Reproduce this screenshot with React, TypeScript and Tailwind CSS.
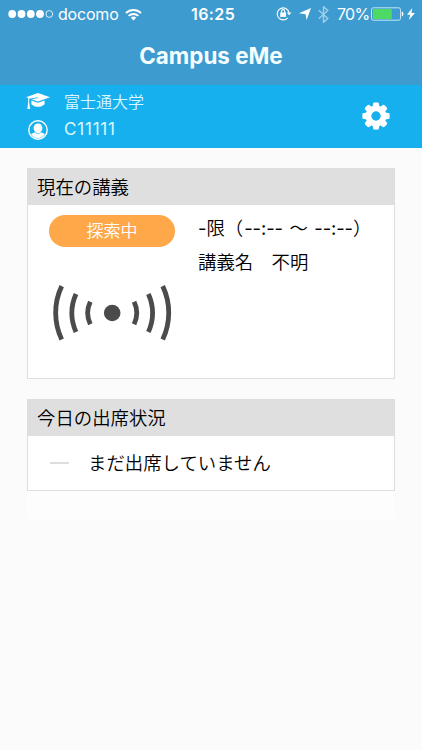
import type { ReactNode } from "react";

function StatusBar() {
  return (
    <div className="relative flex h-7 items-center text-white">
      <svg className="ml-2 h-3 w-[46px]" viewBox="0 0 46 12" fill="#fff">
        {[4.2, 13.5, 22.8, 32].map((x) => (
          <circle key={x} cx={x} cy="6" r="3.9" />
        ))}
        <circle cx="41.3" cy="6" r="3.4" fill="none" stroke="#fff" strokeWidth="0.8" />
      </svg>
      <span className="ml-1 w-[61px] text-[16px] leading-7 tracking-[-0.2px]">docomo</span>
      <svg className="ml-[6px] h-[13px] w-[17px]" viewBox="0 0 17 12" fill="none" stroke="#fff" strokeWidth="2">
        <path d="M1 4.5a10.7 10.7 0 0 1 15 0" />
        <path d="M3.7 7.4a6.8 6.8 0 0 1 9.6 0" />
        <path d="M8.5 12 5.8 9.2a3.9 3.9 0 0 1 5.4 0z" fill="#fff" stroke="none" />
      </svg>
      <span className="absolute left-[191px] text-[16px] font-semibold leading-7 tracking-[0.4px]">
        16:25
      </span>
      <div className="ml-auto flex items-center pr-[7px]">
        <svg className="mb-px h-[15px] w-4" viewBox="0 0 16 15" fill="none" stroke="#fff" strokeWidth="1.1">
          <path d="M11.7 11.8a6 6 0 1 1 1.3-5.3" />
          <path d="M10.8 6.4h4.6l-2.3 2.8z" fill="#fff" stroke="none" />
          <rect x="4.2" y="6.5" width="5.8" height="4.4" fill="#fff" stroke="none" />
          <path d="M5.5 7V5.2a1.6 1.6 0 0 1 3.2 0V7" />
        </svg>
        <svg className="ml-[7px] h-3 w-3" viewBox="0 0 12 12" fill="#fff">
          <path d="M12 0 7.6 12 6.6 6.2 0 5.3z" />
        </svg>
        <svg className="ml-[7px] h-[17px] w-[11px] opacity-50" viewBox="0 0 10 16" fill="none" stroke="#fff" strokeWidth="1.4">
          <path d="m0.5 4 8.5 7.8L5 15.3V.7l4 3.5L.5 12" />
        </svg>
        <span className="ml-2 w-[33px] text-[16px] leading-7 tracking-[-0.7px]">70%</span>
        <svg className="ml-px h-[14px] w-[33px]" viewBox="0 0 33 14" fill="none">
          <rect x="0.5" y="0.8" width="29" height="12.4" rx="1.8" stroke="#c2e6f6" strokeWidth="1" />
          <rect x="1.8" y="2" width="19" height="10" rx="0.6" fill="#4cd964" />
          <path d="M30.8 4.6c2.1.4 2.1 4.4 0 4.8z" fill="#fff" />
        </svg>
        <svg className="ml-[3px] h-3 w-2" viewBox="0 0 8 12" fill="#fff">
          <path d="M5.3 0 0 6.7h3.3L1.8 12 8 4.9H4.4z" />
        </svg>
      </div>
    </div>
  );
}

function GraduationCap() {
  return (
    <svg className="mb-px h-[17px] w-6" viewBox="0 0 24 17" fill="#fff">
      <path d="M12 0 24 4.3 12 8.5 5.5 6.3 12 5.1 11.8 4.2 3.2 5.7V9.5L4.2 16H1.3L2.2 9.6V5.1L0 4.3z" />
      <path d="M5.4 7.4 12 9.7 18.6 7.4V11.3C15.2 14.7 8.8 14.7 5.4 11.3z" />
    </svg>
  );
}

function UserCircle() {
  return (
    <svg className="h-5 w-5" viewBox="0 0 20 20">
      <circle cx="10" cy="10" r="9.2" fill="none" stroke="#fff" strokeWidth="1.4" />
      <path
        d="M10 3.5c2.7 0 4.4 1.9 4.4 4.4 0 1.7-.8 3.2-1.8 4 1 .9 3.2.9 4.3 2.1-1.5 2.4-3.9 4-6.9 4s-5.4-1.6-6.9-4c1.1-1.2 3.3-1.2 4.3-2.1-1-.8-1.8-2.3-1.8-4 0-2.5 1.7-4.4 4.4-4.4z"
        fill="#fff"
      />
      <path d="M6.9 12.3c1.7 1.7 4.5 1.7 6.2 0" fill="none" stroke="#17b0ef" strokeWidth="0.6" />
    </svg>
  );
}

function Gear() {
  return (
    <svg className="mb-px h-7 w-7" viewBox="-14 -14 28 28" fill="#fff">
      {[0, 45, 90, 135, 180, 225, 270, 315].map((angle) => (
        <path
          key={angle}
          d="M-3.7-8.5-2.7-13.1Q-2.6-13.6-2-13.6H2Q2.6-13.6 2.7-13.1L3.7-8.5z"
          transform={`rotate(${angle})`}
        />
      ))}
      <circle r="7.5" fill="none" stroke="#fff" strokeWidth="5.6" />
    </svg>
  );
}

function Beacon() {
  return (
    <svg className="h-[60px] w-[126px]" viewBox="0 0 126 60" fill="none" stroke="#4b4b4b" strokeWidth="4.8">
      <circle cx="63.2" cy="30" r="8.3" fill="#4b4b4b" stroke="none" />
      <path d="M12.7 3.1a62 62 0 0 0 0 53.4" />
      <path d="M27 11a47 47 0 0 0 0 38" />
      <path d="M41.3 18.8a26 26 0 0 0 0 22.4" />
      <path d="M85.1 18.8a26 26 0 0 1 0 22.4" />
      <path d="M99.4 11a47 47 0 0 1 0 38" />
      <path d="M113.7 3.1a62 62 0 0 1 0 53.4" />
    </svg>
  );
}

function Card({ title, children }: { title: string; children: ReactNode }) {
  return (
    <section className="border border-[#dedede] bg-white text-[18.4px] text-black">
      <h2 className="flex h-9 items-center bg-[#dfdfdf] pt-px pl-[9px]">{title}</h2>
      {children}
    </section>
  );
}

export default function App() {
  return (
    <div className="h-[750px] w-[422px] overflow-hidden bg-[#fbfbfb] font-['Inter','Noto_Sans_CJK_JP_DemiLight','Noto_Sans_CJK_JP_Light','Noto_Sans_CJK_JP',sans-serif]">
      <header className="h-[85px] bg-[#3d9bd0]">
        <StatusBar />
        <h1 className="flex h-14 items-center justify-center text-[22.4px] font-bold text-[#f4feff]">
          Campus eMe
        </h1>
      </header>

      <div className="flex h-[63px] items-center justify-between bg-[#17b0ef] pr-8 pl-[26px] text-[#d8f8ff]">
        <div className="flex flex-col">
          <div className="flex h-[29px] items-center">
            <GraduationCap />
            <span className="ml-[14px] text-[16px]">富士通大学</span>
          </div>
          <div className="flex h-[29px] items-center pb-[2px] pl-[2px]">
            <UserCircle />
            <span className="ml-4 text-[17px] tracking-[0.8px]">C11111</span>
          </div>
        </div>
        <Gear />
      </div>

      <main className="flex flex-col gap-5 px-[27px] pt-5">
        <Card title="現在の講義">
          <div className="flex h-[173px] pl-[21px]">
            <div className="flex w-[126px] flex-col pt-[10px]">
              <div className="flex h-8 items-center justify-center rounded-full bg-[#ffa84a] pt-[2px] text-[17px] text-white">
                探索中
              </div>
              <div className="mt-[36px]">
                <Beacon />
              </div>
            </div>
            <div className="ml-[23px] flex flex-col pt-[6px] whitespace-nowrap">
              <p className="h-[34px] leading-[34px]">
                -限（<span className="ml-px word-spacing tracking-[-0.1px] [word-spacing:1.5px]">--:-- 〜 --:--</span>）
              </p>
              <p className="h-[34px] leading-[34px]">講義名　不明</p>
            </div>
          </div>
        </Card>

        <div className="bg-[#fdfdfd] pb-7">
          <Card title="今日の出席状況">
            <div className="flex h-[54px] items-center pl-[22px]">
              <span className="h-[2px] w-[19px] bg-[#dedede]" />
              <span className="ml-[19px] pt-[2px]">まだ出席していません</span>
            </div>
          </Card>
        </div>
      </main>
    </div>
  );
}
